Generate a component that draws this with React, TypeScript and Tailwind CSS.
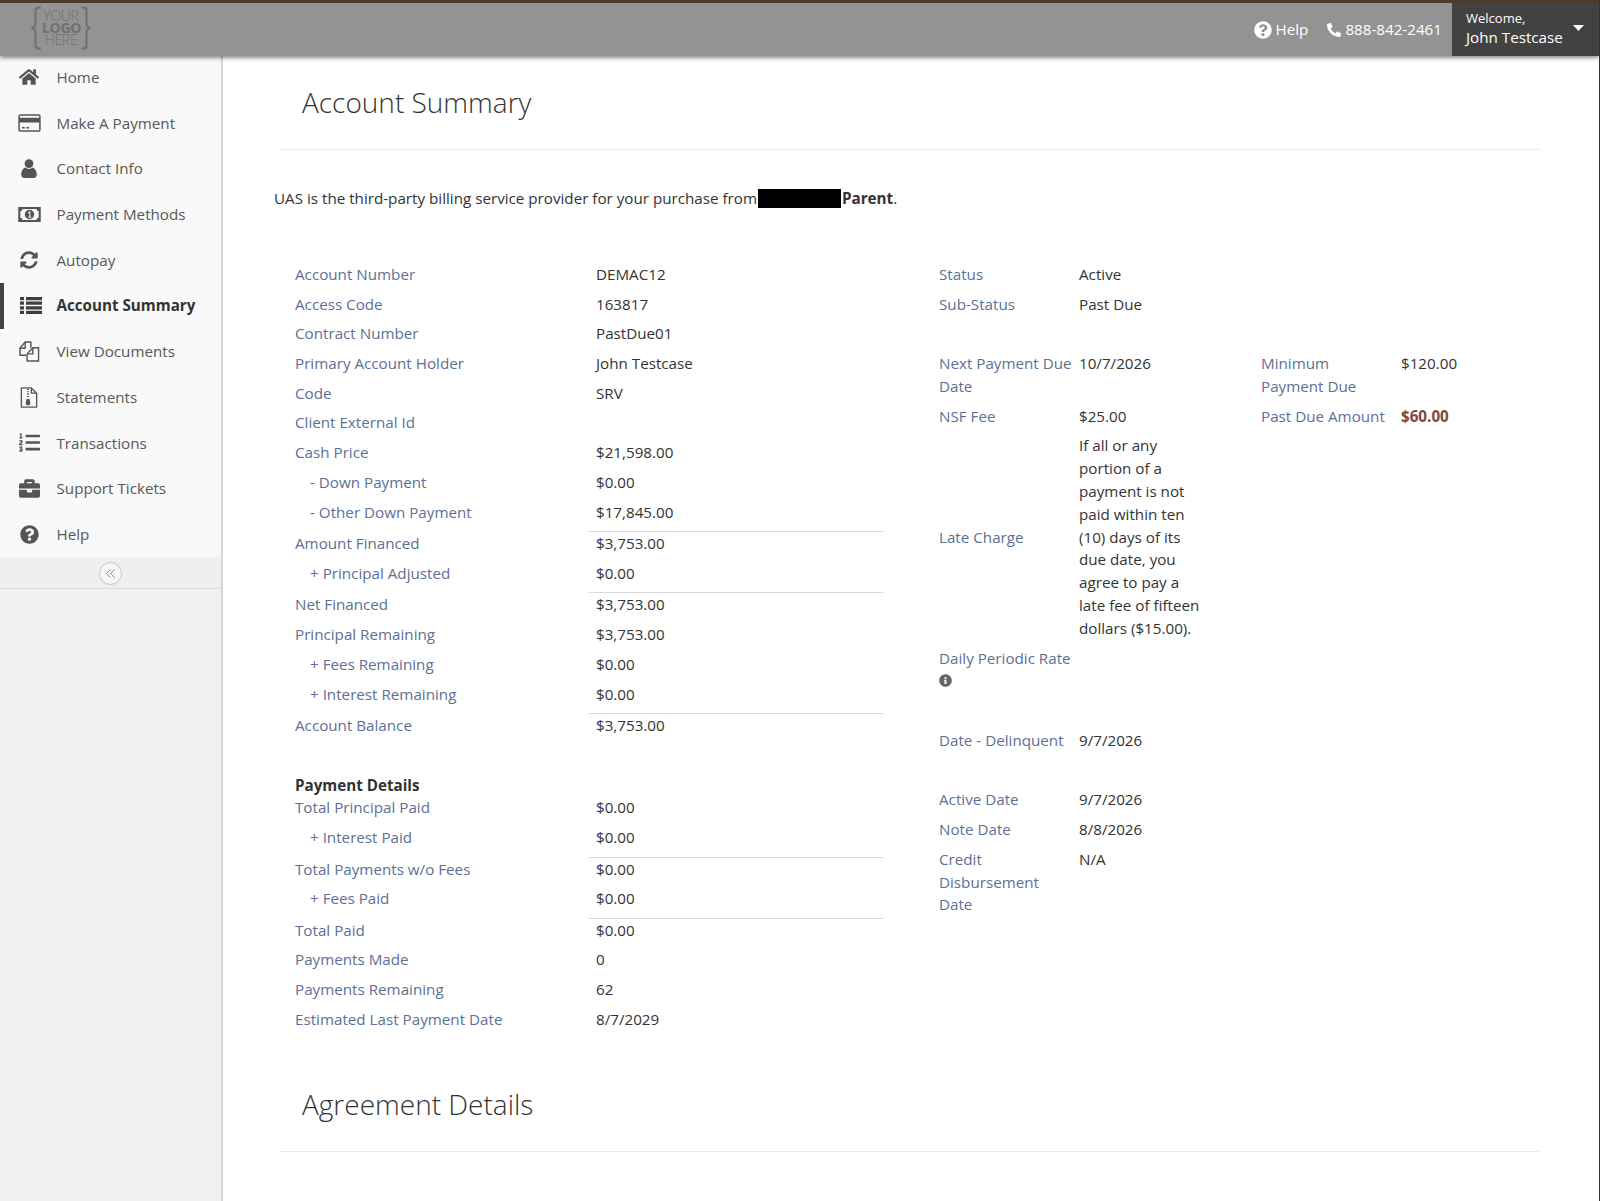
import type { ReactNode } from "react";
import { FaHome, FaSyncAlt, FaListOl, FaBriefcase, FaQuestionCircle, FaPhoneAlt, FaInfoCircle } from "react-icons/fa";

function CardIcon() {
  return (
    <svg viewBox="0 0 24 19" className="w-[23px] h-[18px]" fill="none">
      <rect x="1" y="1" width="22" height="17" rx="1.5" stroke="#555" strokeWidth="1.6" />
      <rect x="1" y="4" width="22" height="5" fill="#555" />
      <path d="M4 14.5h3M8.5 14.5h3" stroke="#555" strokeWidth="1.5" />
    </svg>
  );
}

function UserIcon() {
  return (
    <svg viewBox="0 0 16 19" className="w-[16px] h-[19px]" fill="#555">
      <circle cx="8" cy="4.6" r="4.4" />
      <path d="M0.2 15.5C0.2 11.5 2.5 9.3 4.4 8.6 5.4 9.4 6.6 9.9 8 9.9s2.6-.5 3.6-1.3c1.9.7 4.2 2.9 4.2 6.9 0 2.2-1.4 3.5-3.2 3.5H3.4C1.6 19 .2 17.7.2 15.5z" />
    </svg>
  );
}

function MoneyIcon() {
  return (
    <svg viewBox="0 0 24 16" className="w-[23px] h-[15px]" fill="none">
      <rect x="0" y="0" width="24" height="16" fill="#555" />
      <path d="M4.5 2.2h15a2.4 2.4 0 0 0 2.3 2.3v7a2.4 2.4 0 0 0-2.3 2.3h-15a2.4 2.4 0 0 0-2.3-2.3v-7a2.4 2.4 0 0 0 2.3-2.3z" fill="#f8f8f8" />
      <circle cx="12" cy="8" r="5" fill="#555" />
      <path d="M10.6 6.3 12.3 5v6M10.6 11h3.4" stroke="#f8f8f8" strokeWidth="1.1" />
    </svg>
  );
}

function ListIcon() {
  return (
    <svg viewBox="0 0 22 17" className="w-[22px] h-[17px]" fill="#3f3f3f">
      <path d="M0 0h4v3.200H0zM6 0h16v3.200H6zM0 4.600h4v3.200H0zM6 4.600h16v3.200H6zM0 9.200h4v3.200H0zM6 9.200h16v3.200H6zM0 13.800h4V17H0zM6 13.800h16V17H6z" />
    </svg>
  );
}

function FilesIcon() {
  return (
    <svg viewBox="0 0 22 22" className="w-[22px] h-[21px]" fill="none" stroke="#555" strokeWidth="1.5" strokeLinejoin="round">
      <path d="M8 15H1.5V7.5L7 1h6v6" />
      <path d="M7 1v6.5H1.5" />
      <path d="M9 21V13.5L15 7h6v14z" fill="#f8f8f8" />
      <path d="M15 7v6.5H9" />
    </svg>
  );
}

function ZipIcon() {
  return (
    <svg viewBox="0 0 18 22" className="w-[18px] h-[21px]" fill="none" stroke="#555" strokeWidth="1.4">
      <path d="M1 1h10.5L17 6.5V21H1z" strokeLinejoin="round" />
      <path d="M11.5 1v5.5H17" />
      <path d="M7 2.5h2M7 5h2M7 7.500h2M7 10h2" strokeWidth="1.2" />
      <path d="M6.500 12.500h3l1 4.300a2.300 2.300 0 1 1-5 0z" fill="#555" stroke="none" />
    </svg>
  );
}

function CollapseChevrons() {
  return (
    <svg viewBox="0 0 12 12" className="w-[11px] h-[11px]" fill="none" stroke="#888" strokeWidth="1">
      <path d="M6 1.500 1.500 6 6 10.500M10.500 1.500 6 6l4.500 4.500" />
    </svg>
  );
}

const navItems: { label: string; icon: ReactNode; active?: boolean }[] = [
  { label: "Home", icon: <FaHome className="text-[20px] text-[#555]" /> },
  { label: "Make A Payment", icon: <CardIcon /> },
  { label: "Contact Info", icon: <UserIcon /> },
  { label: "Payment Methods", icon: <MoneyIcon /> },
  { label: "Autopay", icon: <FaSyncAlt className="text-[18px] text-[#555]" /> },
  { label: "Account Summary", icon: <ListIcon />, active: true },
  { label: "View Documents", icon: <FilesIcon /> },
  { label: "Statements", icon: <ZipIcon /> },
  { label: "Transactions", icon: <FaListOl className="text-[21px] text-[#555]" /> },
  { label: "Support Tickets", icon: <FaBriefcase className="text-[21px] text-[#555]" /> },
  { label: "Help", icon: <FaQuestionCircle className="text-[19px] text-[#555]" /> },
];

function Sidebar() {
  return (
    <aside className="w-[223px] shrink-0 bg-[#f1f1f1] border-r-2 border-[#d6d6d6]">
      <nav className="-mt-[1.400px] bg-[#f9f9f9]">
        {navItems.map((item) => (
          <a
            key={item.label}
            className={`flex items-center h-[45.7px] ${item.active ? "border-l-4 border-[#424242] font-bold text-[#333]" : "text-[#585858]"}`}
          >
            <span className={`flex justify-center ${item.active ? "w-[52.500px] pl-[1px]" : "w-[56.500px] pl-[2px]"}`}>{item.icon}</span>
            {item.label}
          </a>
        ))}
      </nav>
      <div className="flex justify-center items-center h-[32px] pt-[1px] bg-[#efefef] border-b border-[#dcdcdc]">
        <button className="flex items-center justify-center size-[23px] rounded-full bg-[#f6f6f6] border border-[#c4c4c4]">
          <CollapseChevrons />
        </button>
      </div>
    </aside>
  );
}

function Header() {
  return (
    <header className="relative z-10 flex items-stretch h-[56px] border-t-[3px] border-[#4b3b2c] bg-[#939393] shadow-[0_2px_4px_rgba(0,0,0,0.45)] text-white">
      <div className="flex items-center ml-[30px] -mt-[4px] text-[#707070]">
        <svg viewBox="0 0 12 46" className="w-[12px] h-[44px]" fill="none" stroke="#707070" strokeWidth="2.200">
          <path d="M11 1.500H8.500C6.500 1.500 5.500 3 5.500 5v13c0 3-1.500 4.500-4 5 2.500.5 4 2 4 5v13c0 2 1 3.500 3 3.500H11" />
        </svg>
        <div className="w-[38px] text-center text-[14px] leading-[12px] tracking-[-0.3px] font-light">
          <div>YOUR</div>
          <div className="font-bold">LOGO</div>
          <div>HERE</div>
        </div>
        <svg viewBox="0 0 12 46" className="w-[12px] h-[44px]" fill="none" stroke="#707070" strokeWidth="2.200">
          <path d="M1 1.500h2.500c2 0 3 1.500 3 3.500v13c0 3 1.500 4.500 4 5-2.500.5-4 2-4 5v13c0 2-1 3.500-3 3.500H1" />
        </svg>
      </div>
      <div className="ml-auto flex items-center">
        <FaQuestionCircle className="text-[18px] mr-[4px]" />
        <span>Help</span>
        <FaPhoneAlt className="text-[14px] ml-[19px] mr-[4px]" />
        <span className="mr-[10px]">888-842-2461</span>
      </div>
      <div className="relative w-[147px] pl-[14px] pt-[6px] bg-[#424242]">
        <div className="text-[13px] leading-[18px]">Welcome,</div>
        <div className="leading-[20px]">John Testcase</div>
        <svg viewBox="0 0 11 6" className="absolute right-[15px] top-[22px] w-[11px] h-[6px]" fill="#fff">
          <path d="M0 0h11L5.500 6z" />
        </svg>
      </div>
    </header>
  );
}

function SectionTitle({ children }: { children: string }) {
  return (
    <div className="ml-[58px] mr-[59px] border-b border-dotted border-[#d4d4d4]">
      <h2 className="pl-[21px] pb-[27px] text-[28px] leading-[40px] font-light text-[#333]">{children}</h2>
    </div>
  );
}

type LeftRowProps = { label: string; value?: string; sub?: boolean; line?: boolean; tall?: boolean };

function LeftRow({ label, value, sub, line, tall }: LeftRowProps) {
  return (
    <div className={`flex leading-[22.800px] ${line ? "h-[30.700px]" : tall ? "h-[30.400px]" : sub ? "h-[30.300px]" : "h-[29.700px]"}`}>
      <div className={`w-[294px] text-[#5d7096] ${sub ? "pl-[15px]" : ""} ${line ? "pt-px" : ""}`}>{label}</div>
      <div className={`w-[294px] pl-[7px] text-[#333] ${line ? "border-t border-[#d9d9d9]" : ""}`}>{value}</div>
    </div>
  );
}

function LeftColumn() {
  return (
    <div className="w-[588px]">
      <LeftRow label="Account Number" value="DEMAC12" />
      <LeftRow label="Access Code" value="163817" />
      <LeftRow label="Contract Number" value="PastDue01" />
      <LeftRow label="Primary Account Holder" value="John Testcase" />
      <LeftRow label="Code" value="SRV" />
      <LeftRow label="Client External Id" />
      <LeftRow label="Cash Price" value="$21,598.00" />
      <LeftRow label="- Down Payment" value="$0.00" sub />
      <LeftRow label="- Other Down Payment" value="$17,845.00" sub />
      <LeftRow label="Amount Financed" value="$3,753.00" line />
      <LeftRow label="+ Principal Adjusted" value="$0.00" sub />
      <LeftRow label="Net Financed" value="$3,753.00" line />
      <LeftRow label="Principal Remaining" value="$3,753.00" />
      <LeftRow label="+ Fees Remaining" value="$0.00" sub />
      <LeftRow label="+ Interest Remaining" value="$0.00" sub />
      <LeftRow label="Account Balance" value="$3,753.00" line />
      <div className="mt-[29.500px] h-[22.300px] leading-[22.800px] font-bold text-[#333]">Payment Details</div>
      <LeftRow label="Total Principal Paid" value="$0.00" tall />
      <LeftRow label="+ Interest Paid" value="$0.00" sub />
      <LeftRow label="Total Payments w/o Fees" value="$0.00" line />
      <LeftRow label="+ Fees Paid" value="$0.00" sub />
      <LeftRow label="Total Paid" value="$0.00" line />
      <LeftRow label="Payments Made" value="0" />
      <LeftRow label="Payments Remaining" value="62" />
      <LeftRow label="Estimated Last Payment Date" value="8/7/2029" />
    </div>
  );
}

function Label({ children, center }: { children: ReactNode; center?: boolean }) {
  return <div className={`w-[140px] pr-[4px] shrink-0 text-[#5d7096] ${center ? "self-center" : ""}`}>{children}</div>;
}

function RightColumn() {
  return (
    <div className="w-[540px] leading-[22.800px] text-[#333] [&>div]:pb-[7px]">
      <div className="flex">
        <Label>Status</Label>
        <div>Active</div>
      </div>
      <div className="flex mb-[29.500px]">
        <Label>Sub-Status</Label>
        <div>Past Due</div>
      </div>
      <div className="flex">
        <Label>Next Payment Due Date</Label>
        <div className="w-[182px]">10/7/2026</div>
        <Label>Minimum<br />Payment Due</Label>
        <div>$120.00</div>
      </div>
      <div className="flex">
        <Label>NSF Fee</Label>
        <div className="w-[182px]">$25.00</div>
        <Label>Past Due Amount</Label>
        <div className="font-bold text-[#85443a]">$60.00</div>
      </div>
      <div className="flex">
        <Label center>Late Charge</Label>
        <div className="w-[126px]">If all or any portion of a payment is not paid within ten (10) days of its due date, you agree to pay a late fee of fifteen dollars ($15.00).</div>
      </div>
      <div className="flex mb-[29.300px]">
        <Label>
          Daily Periodic Rate
          <FaInfoCircle className="text-[13px] text-[#666] mt-[5px] mb-[4.800px]" />
        </Label>
      </div>
      <div className="flex mb-[29.800px]">
        <Label>Date - Delinquent</Label>
        <div>9/7/2026</div>
      </div>
      <div className="flex">
        <Label>Active Date</Label>
        <div>9/7/2026</div>
      </div>
      <div className="flex">
        <Label>Note Date</Label>
        <div>8/8/2026</div>
      </div>
      <div className="flex">
        <Label>Credit<br />Disbursement<br />Date</Label>
        <div>N/A</div>
      </div>
    </div>
  );
}

export default function App() {
  return (
    <div className="flex flex-col h-[1201px] overflow-hidden border-r border-[#333] bg-white text-[15.200px] font-['Open_Sans',sans-serif]">
      <Header />
      <div className="flex flex-1">
        <Sidebar />
        <main className="flex-1 pt-[26px]">
          <SectionTitle>Account Summary</SectionTitle>
          <p className="mt-[37px] ml-[51px] leading-[23px] text-[#333] flex items-center">
            UAS is the third-party billing service provider for your purchase from
            <span className="inline-block w-[83px] h-[19px] bg-black mx-[1px]" />
            <span className="font-bold">Parent</span>.
          </p>
          <div className="flex mt-[53px] ml-[72px]">
            <LeftColumn />
            <div className="ml-[56px]">
              <RightColumn />
            </div>
          </div>
          <div className="mt-[47px]">
            <SectionTitle>Agreement Details</SectionTitle>
          </div>
        </main>
      </div>
    </div>
  );
}
